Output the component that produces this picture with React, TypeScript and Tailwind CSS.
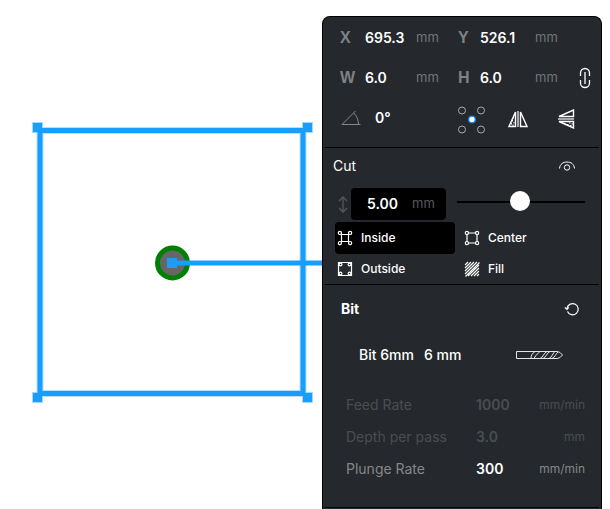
import React from 'react';

const FONT = "font-['Inter','Liberation_Sans',sans-serif]";

// === DRAWING CANVAS ===
function Canvas() {
  const handles = [
    [32, 122],
    [302, 122],
    [32, 392],
    [302, 392],
  ];
  return (
    <svg className="absolute top-0 left-0 w-full h-full" aria-label="Drawing canvas">
      <rect x="40" y="130.5" width="263" height="263" fill="none" stroke="#b9defc" strokeWidth="7" />
      {handles.map(([x, y]) => (
        <rect key={`${x}-${y}`} x={x} y={y} width="11" height="11" fill="#a5d7fc" />
      ))}
      <rect x="40" y="130.5" width="263" height="263" fill="none" stroke="#189eff" strokeWidth="5" />
      {handles.map(([x, y]) => (
        <rect key={`${x}-${y}`} x={x + 1} y={y + 1} width="9" height="9" fill="#189eff" />
      ))}
      <circle cx="172.5" cy="263" r="15" fill="#666" stroke="#008000" strokeWidth="5" />
      <path d="M172 263H330" stroke="#189eff" strokeWidth="5" />
      <rect x="167" y="258" width="10" height="10" fill="#189eff" />
    </svg>
  );
}

// === ICONS ===
function AngleIcon() {
  return (
    <svg width="20" height="16" viewBox="0 0 20 16" fill="none" stroke="#85878a" aria-hidden="true">
      <path d="M14.5 1 1 14.5H19.5M12.5 3C16 6 17.5 10 17.5 14.5" />
    </svg>
  );
}

function LinkIcon() {
  return (
    <svg width="12" height="22" viewBox="0 0 12 22" fill="none" stroke="#fff" strokeWidth="1.3" aria-hidden="true">
      <path d="M1.5 9V6a4.5 4.5 0 0 1 9 0v3M1.5 13v3a4.5 4.5 0 0 0 9 0v-3M6 5v12" />
    </svg>
  );
}

function AnchorIcon() {
  return (
    <svg width="28" height="28" viewBox="0 0 28 28" fill="none" stroke="#a9abad" aria-hidden="true">
      <circle cx="4" cy="4.5" r="3.5" />
      <circle cx="23" cy="4.5" r="3.5" />
      <circle cx="4" cy="23.5" r="3.5" />
      <circle cx="23" cy="23.5" r="3.5" />
      <circle cx="14" cy="13.5" r="3.4" fill="#fff" stroke="#0b7ddf" strokeWidth="1.4" />
    </svg>
  );
}

function MirrorIcon({ className = '' }: { className?: string }) {
  return (
    <svg className={className} width="20" height="18" viewBox="0 0 20 18" fill="none" stroke="#fff" strokeWidth="1.4" aria-hidden="true">
      <path d="M7.5 2 1 16.5h6.5zM12.5 2 19 16.5h-6.5z" />
      <path d="M10 1v16" stroke="#a5a7a8" strokeWidth="2" />
      <path d="M5.500 7v1.500M4.500 10v1.500M6 12v1.500M3.500 13v1.500M5 14.500V16" strokeWidth="1" />
    </svg>
  );
}

function EyeIcon() {
  return (
    <svg width="18" height="12" viewBox="0 0 18 12" fill="none" stroke="#fff" aria-hidden="true">
      <path d="M1.5 8.5C2 4 5 2 9 2S16 4 16.5 8.5" />
      <circle cx="9" cy="7.500" r="2.7" />
    </svg>
  );
}

function DepthIcon() {
  return (
    <svg width="10" height="17" viewBox="0 0 10 17" fill="none" stroke="#55585b" strokeWidth="1.3" aria-hidden="true">
      <path d="M5 1v15M1 5l4-4 4 4M1 12l4 4 4-4" />
    </svg>
  );
}

function InsideIcon() {
  return (
    <svg width="16" height="16" viewBox="0 0 16 16" fill="none" stroke="#fff" strokeWidth="1.2" aria-hidden="true">
      <path d="M4.5 4.5h7v7h-7z" />
      <circle cx="2.9" cy="2.9" r="1.6" />
      <circle cx="13.1" cy="2.9" r="1.6" />
      <circle cx="2.9" cy="13.1" r="1.6" />
      <circle cx="13.1" cy="13.1" r="1.6" />
    </svg>
  );
}

function CenterIcon() {
  return (
    <svg width="16" height="16" viewBox="0 0 16 16" fill="none" stroke="#fff" strokeWidth="1.2" aria-hidden="true">
      <path d="M4.5 3h7M4.5 13h7M3 4.5v7M13 4.5v7" />
      <circle cx="2.9" cy="2.9" r="1.6" />
      <circle cx="13.1" cy="2.9" r="1.6" />
      <circle cx="2.9" cy="13.1" r="1.6" />
      <circle cx="13.1" cy="13.1" r="1.6" />
    </svg>
  );
}

function OutsideIcon() {
  return (
    <svg width="16" height="16" viewBox="0 0 16 16" fill="none" stroke="#fff" strokeWidth="1.2" aria-hidden="true">
      <path d="M1.5 1.5h13v13h-13z" />
      <circle cx="3.500" cy="3.500" r="1.400" />
      <circle cx="12.500" cy="3.500" r="1.400" />
      <circle cx="3.500" cy="12.500" r="1.400" />
      <circle cx="12.500" cy="12.500" r="1.400" />
    </svg>
  );
}

function FillIcon() {
  return (
    <svg width="16" height="16" viewBox="0 0 16 16" fill="none" stroke="#fff" strokeWidth="1.1" aria-hidden="true">
      <path d="M1 4l3-3M1 7l6-6M1 10l9-9M1 13 13 1M1.5 15.5l14-14M4 15 15 4M7 15l8-8M10 15l5-5M13 15l2-2" />
    </svg>
  );
}

function ResetIcon() {
  return (
    <svg width="16" height="14" viewBox="0 0 16 14" fill="none" stroke="#fff" strokeWidth="1.2" aria-hidden="true">
      <path d="M3.500 9.500A5.600 5.600 0 1 0 3.100 6.200" />
      <path d="M.8 5.500 3 7.300l1.800-2" />
    </svg>
  );
}

function BitIcon() {
  return (
    <svg width="50" height="10" viewBox="0 0 50 10" fill="none" stroke="#e4e5e5" aria-hidden="true">
      <path d="M1.500 1.500H42q3 0 5.500 3.500Q45 8.500 42 8.500H1.500z" />
      <path d="M16 8.500c0-3 1-5 4-7M19 8.500c2-4 4-5 6-7M25 8.500c3-1 4-6 7-7M28 8.500c3-1 4-6 7-7M34 8.500c3-1 4-6 6-7M37 8.500c3-1 4-5 6-6.500" />
    </svg>
  );
}

// === FIELDS ===
interface FieldProps {
  label: string;
  value: string;
  labelClass: string;
  valueClass: string;
}

function SizeField({ label, value, labelClass, valueClass }: FieldProps) {
  return (
    <label className="flex items-center">
      <span className={`${labelClass} font-['Liberation_Sans',sans-serif] text-base font-bold text-[#7f8184]`}>{label}</span>
      <input className={`${valueClass} bg-transparent text-sm font-semibold outline-none`} defaultValue={value} />
      <span className="text-[13px] text-[#737578]">mm</span>
    </label>
  );
}

interface RateProps {
  label: string;
  value: string;
  unit: string;
  disabled?: boolean;
}

function RateRow({ label, value, unit, disabled }: RateProps) {
  return (
    <label className={`flex h-8 items-center text-sm ${disabled ? 'text-[#4b4e51]' : 'text-[#85878a]'}`}>
      <span className="w-[130px]">{label}</span>
      <input
        className={`w-12 bg-transparent font-semibold outline-none ${disabled ? '' : 'text-white'}`}
        defaultValue={value}
        disabled={disabled}
      />
      <span className="flex-1 text-right text-xs">{unit}</span>
    </label>
  );
}

function CutOption({ label, icon, active }: { label: string; icon: React.ReactNode; active?: boolean }) {
  return (
    <button
      type="button"
      aria-pressed={!!active}
      className={`flex items-center gap-2 rounded pl-0.5 text-xs font-medium ${active ? 'bg-black' : ''}`}
    >
      {icon}
      {label}
    </button>
  );
}

export default function App() {
  return (
    <div className={`relative flex min-h-screen justify-end overflow-hidden bg-white pt-4 pr-2 ${FONT}`}>
      <Canvas />

      {/* === PROPERTIES PANEL === */}
      <aside className="relative w-[280px] rounded-t-lg border-x-1 border-t-1 border-black bg-[#25282c] text-white">
        {/* Position and size */}
        <section className="mx-0.5 border-b border-black pt-px pb-[9px]">
          <div className="grid h-10 grid-cols-[118px_1fr] items-center pl-[15px]">
            <SizeField label="X" value="695.3" labelClass="w-[25px]" valueClass="w-[51px]" />
            <SizeField label="Y" value="526.1" labelClass="w-[22px]" valueClass="w-[55px]" />
          </div>
          <div className="flex h-10 items-center pr-2 pl-[15px]">
            <div className="grid flex-1 grid-cols-[118px_1fr] items-center">
              <SizeField label="W" value="6.0" labelClass="w-[25px]" valueClass="w-[51px]" />
              <SizeField label="H" value="6.0" labelClass="w-[22px]" valueClass="w-[55px]" />
            </div>
            <button type="button" aria-label="Lock proportions">
              <LinkIcon />
            </button>
          </div>
          <div className="flex h-10 items-center pl-4">
            <label className="flex w-[117px] items-center gap-3.5">
              <AngleIcon />
              <input aria-label="Rotation" className="w-12 bg-transparent text-sm font-semibold outline-none" defaultValue="0°" />
            </label>
            <button type="button" aria-label="Anchor point" className="pt-1">
              <AnchorIcon />
            </button>
            <button type="button" aria-label="Flip horizontally" className="ml-[22px] pt-0.5">
              <MirrorIcon />
            </button>
            <button type="button" aria-label="Flip vertically" className="ml-7 pt-0.5">
              <MirrorIcon className="-rotate-90" />
            </button>
          </div>
        </section>

        {/* Cut settings */}
        <section className="mx-0.5 border-b border-black">
          <div className="flex h-10 items-center justify-between pr-[23px] pb-1 pl-2">
            <h2 className="text-sm">Cut</h2>
            <button type="button" aria-label="Preview cut">
              <EyeIcon />
            </button>
          </div>
          <div className="flex items-center pr-3.5 pl-[13px]">
            <DepthIcon />
            <label className="ml-[3px] flex h-8 w-[95px] items-center rounded bg-black pb-px pl-4 text-sm">
              <input aria-label="Cut depth" className="w-[45px] bg-transparent font-semibold outline-none" defaultValue="5.00" />
              <span className="text-[13px] text-[#55585b]">mm</span>
            </label>
            <input
              type="range"
              aria-label="Cut depth slider"
              min={0}
              max={10}
              step={0.1}
              defaultValue={4.9}
              className="mb-1 ml-[11px] h-5 min-w-0 flex-1 appearance-none bg-transparent [&::-webkit-slider-runnable-track]:h-0.5 [&::-webkit-slider-runnable-track]:bg-black [&::-webkit-slider-thumb]:-mt-2.5 [&::-webkit-slider-thumb]:size-5 [&::-webkit-slider-thumb]:appearance-none [&::-webkit-slider-thumb]:rounded-full [&::-webkit-slider-thumb]:bg-white"
            />
          </div>
          <div className="mt-0.5 grid grid-cols-[120px_1fr] grid-rows-[32px_30px] gap-x-[7px] pl-2.5">
            <CutOption label="Inside" icon={<InsideIcon />} active />
            <CutOption label="Center" icon={<CenterIcon />} />
            <CutOption label="Outside" icon={<OutsideIcon />} />
            <CutOption label="Fill" icon={<FillIcon />} />
          </div>
        </section>

        {/* Bit settings */}
        <section className="mx-0.5 border-b border-black pr-3.5 pb-[22px]">
          <div className="flex h-12 items-center justify-between pr-[5px] pl-4">
            <h2 className="text-sm font-bold">Bit</h2>
            <button type="button" aria-label="Reset bit">
              <ResetIcon />
            </button>
          </div>
          <button type="button" className="flex h-11 w-full items-center pl-[34px] text-sm font-medium">
            <span>Bit 6mm</span>
            <span className="ml-2.5 flex-1 text-left">6 mm</span>
            <span className="mr-5">
              <BitIcon />
            </span>
          </button>
          <div className="mt-3 pl-[21px]">
            <RateRow label="Feed Rate" value="1000" unit="mm/min" disabled />
            <RateRow label="Depth per pass" value="3.0" unit="mm" disabled />
            <RateRow label="Plunge Rate" value="300" unit="mm/min" />
          </div>
        </section>
      </aside>
    </div>
  );
}
